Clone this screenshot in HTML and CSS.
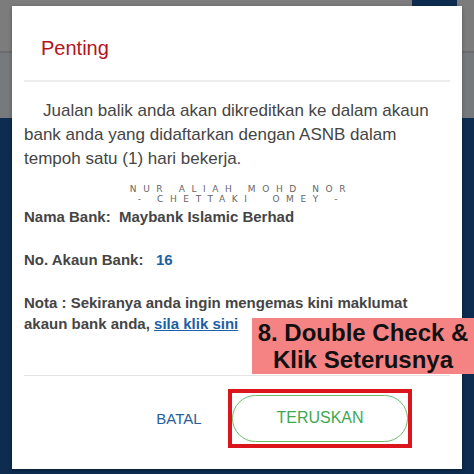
FILE: index.html
```html
<!DOCTYPE html>
<html lang="ms">
<head>
    <meta charset="UTF-8">
    <meta name="viewport" content="width=device-width, initial-scale=1.0">
    <title>Penting</title>
    <link rel="stylesheet" href="styles.css">
</head>
<body>

<div class="screen">
    <!-- App behind the modal (dimmed) -->
    <div class="appbar">
        <div class="appbar-top"><span class="appbar-btn"></span></div>
    </div>
    <div class="app-body"></div>

    <!-- Modal -->
    <div class="dialog">
        <h2 class="dialog-title">Penting</h2>
        <div class="dialog-content">
            <p class="intro">Jualan balik anda akan dikreditkan ke dalam akaun bank anda yang didaftarkan dengan ASNB dalam tempoh satu (1) hari bekerja.</p>

            <div class="watermark">
                <span>NUR ALIAH MOHD NOR</span>
                <span>- CHETTAKI&nbsp;&nbsp;OMEY -</span>
            </div>

            <p class="info">Nama Bank:&nbsp; Maybank Islamic Berhad</p>
            <p class="info">No. Akaun Bank:&nbsp;&nbsp; <span class="acc-no">16</span></p>
            <p class="info note">Nota : Sekiranya anda ingin mengemas kini maklumat<br>akaun bank anda, <a href="#">sila klik sini</a></p>
        </div>
        <div class="dialog-actions">
            <button class="btn-cancel">BATAL</button>
            <div class="highlight">
                <button class="btn-continue">TERUSKAN</button>
            </div>
        </div>
    </div>

    <!-- Tutorial annotation -->
    <div class="callout">8. Double Check &amp;<br>Klik Seterusnya</div>
</div>

</body>
</html>
```

FILE: styles.css
```css
body {
    margin: 0;
    padding: 0;
    font-family: 'Liberation Sans', Arial, sans-serif;
}

.screen {
    position: relative;
    width: 474px;
    height: 474px;
    overflow: hidden;
    background-color: #0d2c4f;
}

.appbar {
    height: 118px;
    background-color: #777a7d;
}

.appbar-top {
    height: 51px;
    border-bottom: 2px solid #6a6c6f;
    background-color: #7c7c7c;
    position: relative;
}

.appbar-btn {
    position: absolute;
    left: 412px;
    top: 0;
    width: 45px;
    height: 8px;
    background-color: #0d2c4f;
}

.app-body {
    height: 356px;
}

/* Modal */
.dialog {
    position: absolute;
    left: 12px;
    top: 6px;
    width: 450px;
    height: 463px;
    background-color: #fff;
    box-shadow: 0 1px 4px rgba(0, 0, 0, 0.3);
    display: flex;
    flex-direction: column;
}

.dialog-title {
    margin: 0 12px;
    padding: 30px 0 20px 17px;
    font-size: 20px;
    font-weight: normal;
    line-height: 24px;
    color: #b3141d;
    border-bottom: 2px solid #ececec;
}

.dialog-content {
    padding: 17px 12px 0;
    color: #454545;
    flex: 1;
}

.intro {
    margin: 0;
    font-size: 17px;
    line-height: 24px;
    text-indent: 19px;
}

.watermark {
    display: flex;
    flex-direction: column;
    align-items: center;
    margin: 13px 0 2px;
    padding-left: 8px;
    font-family: 'DejaVu Sans', sans-serif;
    font-size: 9px;
    line-height: 10px;
    letter-spacing: 6.6px;
    color: #666;
}

.info {
    margin: 0 0 22px;
    font-size: 15px;
    font-weight: bold;
    line-height: 21px;
}

.note {
    margin-bottom: 0;
}

.acc-no {
    color: #1e60a4;
}

.info a {
    color: #1e60a4;
}

.dialog-actions {
    margin: 0 12px;
    height: 94px;
    border-top: 1px solid #e4e4e4;
    display: flex;
    align-items: center;
    padding: 0 0 9px 108px;
    box-sizing: border-box;
}

.btn-cancel {
    background: none;
    border: none;
    width: 94px;
    padding: 0;
    font-family: inherit;
    font-size: 15px;
    color: #2a5e98;
}

.highlight {
    border: 4px solid #dc141c;
    padding: 2px 0;
    width: 176px;
    margin-left: 2px;
}

.btn-continue {
    display: block;
    width: 100%;
    height: 47px;
    background: #fff;
    border: 1px solid #6cbb6c;
    border-radius: 24px;
    font-family: inherit;
    font-size: 16px;
    color: #3fa94f;
}

/* Tutorial annotation */
.callout {
    position: absolute;
    left: 252px;
    top: 318px;
    width: 222px;
    height: 56px;
    padding-top: 1px;
    box-sizing: border-box;
    background-color: #f68383;
    color: #111;
    font-size: 24px;
    font-weight: bold;
    line-height: 27px;
    text-align: center;
}
```
